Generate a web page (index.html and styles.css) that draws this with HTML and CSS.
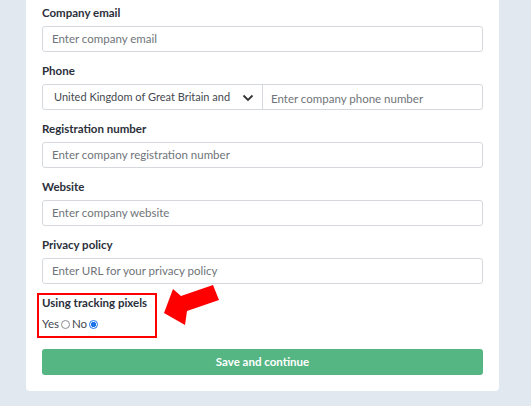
FILE: index.html
```html
<!DOCTYPE html>
<html>
<head>
<meta charset="utf-8">
<link rel="stylesheet" href="styles.css">
</head>
<body>
<div class="card">
  <div class="field">
    <div class="label">Company email</div>
    <div class="input"><span class="ph">Enter company email</span></div>
  </div>
  <div class="field">
    <div class="label">Phone</div>
    <div class="input phone">
      <div class="country">
        <span class="country-name">United Kingdom of Great Britain and</span>
        <svg class="chev" width="12" height="8" viewBox="0 0 12 8"><path d="M1.5 1.5 L6 6 L10.5 1.5" fill="none" stroke="#333" stroke-width="1.8"/></svg>
      </div>
      <div class="number"><span class="ph">Enter company phone number</span></div>
    </div>
  </div>
  <div class="field">
    <div class="label">Registration number</div>
    <div class="input"><span class="ph">Enter company registration number</span></div>
  </div>
  <div class="field">
    <div class="label">Website</div>
    <div class="input"><span class="ph">Enter company website</span></div>
  </div>
  <div class="field">
    <div class="label">Privacy policy</div>
    <div class="input"><span class="ph">Enter URL for your privacy policy</span></div>
  </div>
  <div class="tracking">
    <div class="label">Using tracking pixels</div>
    <div class="radios">
      <span class="opt">Yes</span><span class="radio"></span><span class="opt">No</span><span class="radio checked"></span>
    </div>
  </div>
  <div class="button">Save and continue</div>
</div>
<svg class="arrow" width="531" height="406" viewBox="0 0 531 406">
  <polygon points="164,313 173,289 181,296 213,285 219,300 187,311 185,325" fill="#ff0000"/>
</svg>
</body>
</html>
```
FILE: styles.css
```css
html, body {
  margin: 0;
  padding: 0;
}
body {
  background: #e1e8f0;
  font-family: Lato, "Noto Sans", sans-serif;
  width: 531px;
  height: 406px;
  overflow: hidden;
  position: relative;
}
.card {
  margin-left: 26px;
  width: 473px;
  box-sizing: border-box;
  background: #ffffff;
  padding: 5px 16px 16px 16px;
  border-radius: 0 0 4px 4px;
}
.field {
  margin-bottom: 11px;
}
.label {
  font-size: 11.5px;
  font-weight: 700;
  line-height: 16px;
  color: #2b2f3a;
  margin-bottom: 5px;
  white-space: nowrap;
}
.input {
  height: 26px;
  box-sizing: border-box;
  border: 1px solid #d5d9de;
  border-radius: 3px;
  display: flex;
  align-items: center;
  padding: 0 0 2px 9px;
}
.ph {
  font-size: 11.5px;
  color: #6f7479;
  white-space: nowrap;
}
.phone {
  padding: 0;
}
.country {
  width: 220px;
  height: 100%;
  box-sizing: border-box;
  border-right: 1px solid #d5d9de;
  display: flex;
  align-items: center;
  justify-content: space-between;
  padding: 0 8px 1px 11px;
}
.country-name {
  font-size: 11px;
  color: #444a50;
  white-space: nowrap;
}
.chev {
  margin-top: 2px;
}
.number {
  padding: 0 0 2px 8px;
}
.tracking {
  margin-top: -2px;
  margin-left: -5px;
  width: 120px;
  box-sizing: border-box;
  border: 2px solid #ff0000;
  padding: 0 0 4px 3px;
}
.radios {
  display: flex;
  align-items: center;
  height: 16px;
  font-size: 11.5px;
  color: #444a50;
}
.opt {
  line-height: 16px;
}
.radio {
  width: 9px;
  height: 9px;
  box-sizing: border-box;
  border: 1px solid #8a8f94;
  border-radius: 50%;
  margin: 0 2px;
}
.radio.checked {
  border-color: #1a73e8;
  background: radial-gradient(circle, #1a73e8 0 2.4px, #ffffff 2.9px);
}
.button {
  margin-top: 11px;
  height: 26px;
  background: #55b683;
  border-radius: 3px;
  color: #ffffff;
  font-size: 11.5px;
  font-weight: 700;
  display: flex;
  align-items: center;
  justify-content: center;
  padding-bottom: 1px;
  box-sizing: border-box;
}
.arrow {
  position: absolute;
  left: 0;
  top: 0;
  pointer-events: none;
}
```
